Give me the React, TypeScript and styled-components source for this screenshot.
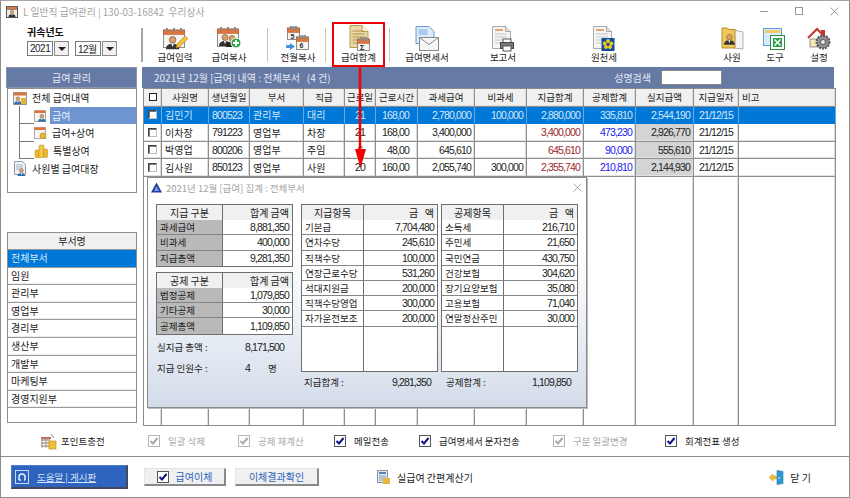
import React from "react";
import styled, { createGlobalStyle } from "styled-components";

const KR = `"Noto Sans CJK KR", "Noto Sans", sans-serif`;
const NUM = `"Liberation Sans", "Noto Sans CJK KR", sans-serif`;

const Global = createGlobalStyle`
  html, body { margin: 0; padding: 0; background: #fff; }
  * { box-sizing: border-box; }
  #root { width: 850px; height: 498px; overflow: hidden; }
`;

const Win = styled.div`
  position: relative; width: 850px; height: 498px; background: #fff;
  border: 1px solid #8c8c8c; border-top-color: #a5a5a5;
  display: flex; flex-direction: column;
  font-family: ${KR}; font-size: 9.5px; color: #222; overflow: hidden;
`;
const TitleBar = styled.div`
  height: 21px; display: flex; align-items: center; padding: 0 10px 0 5px; flex: none;
`;
const TitleText = styled.span`
  margin-left: 5px; color: #a3a3a3; font-size: 9.8px; white-space: pre;
`;
const WinBtns = styled.div`margin-left: auto; display: flex; gap: 26px; align-items: center;`;

const Toolbar = styled.div`height: 45px; flex: none; display: flex; align-items: stretch; padding-left: 26px;`;
const YearBlock = styled.div`width: 114px; padding-top: 3px; display: flex; flex-direction: column; gap: 3px;`;
const YearLabel = styled.div`font-weight: 700; font-size: 10px; line-height: 13px; color: #111;`;
const Selects = styled.div`display: flex; gap: 6px;`;
const Select = styled.div`display: flex; gap: 1px; width: 42px; height: 15px;`;
const SelectValue = styled.div`
  width: 26px; border: 1px solid #7a7a7a; display: flex; align-items: center; padding-left: 2px;
  font-size: 10px; letter-spacing: -.5px; color: #222; font-family: ${NUM}; background: #fff; white-space: nowrap; overflow: hidden;
`;
const SelectArrow = styled.span`
  flex: 1; background: #f0f0f0; border: 1px solid #8a8a8a;
  display: flex; align-items: center; justify-content: center;
  &::after { content: ""; border-left: 4px solid transparent; border-right: 4px solid transparent; border-top: 4px solid #222; }
`;
const Divider = styled.div<{ $ml?: number; $thick?: boolean }>`
  flex: none; margin: 6px 0 5px ${p => p.$ml ?? 0}px; width: ${p => (p.$thick ? 2 : 1)}px;
  background: ${p => (p.$thick ? "#a6a6a6" : "#c4c4c4")};
`;
const ToolBtn = styled.div<{ $w: number; $ml?: number }>`
  flex: none; width: ${p => p.$w}px; margin-left: ${p => p.$ml ?? 0}px;
  display: flex; flex-direction: column; align-items: center; padding-top: 4px; position: relative;
`;
const ToolIcon = styled.div`height: 25px; display: flex; align-items: center; justify-content: center;`;
const ToolLabel = styled.div`font-size: 9.5px; line-height: 13px; color: #222; white-space: nowrap;`;
const RedBox = styled.div`
  position: absolute; left: 0; right: 0; top: 0; bottom: 0; border: 2px solid #f00000; pointer-events: none;
`;
const RedArrow = styled.svg`position: absolute; left: 352px; top: 64px; z-index: 5;`;

const Body = styled.div`height: 359px; flex: none; display: flex; padding-left: 5px;`;
const Left = styled.div`width: 131px; flex: none; display: flex; flex-direction: column;`;
const PanelHead = styled.div`
  height: 21px; flex: none; background: #667aa6; color: #e6eaf3; display: flex; align-items: center;
  border: 1px solid #8793ad; font-size: 10px; white-space: pre;
`;
const LeftHead = styled(PanelHead)`justify-content: center;`;
const Tree = styled.div`
  height: 105px; flex: none; margin-left: 1px; border: 1px solid #8e8e8e; position: relative;
`;
const TreeRow = styled.div<{ $sub?: boolean }>`
  height: 17.6px; display: flex; align-items: center; padding-left: ${p => (p.$sub ? 26 : 5)}px; gap: 3px;
  font-size: 10px; color: #222; white-space: nowrap;
`;
const TreeText = styled.span<{ $sel?: boolean }>`
  flex: ${p => (p.$sel ? 1 : "none")}; height: 17px; line-height: 17px; padding-left: 2px;
  background: ${p => (p.$sel ? "#6f94d2" : "transparent")}; color: ${p => (p.$sel ? "#e9f0fa" : "#222")};
`;
const TreeLines = styled.div`
  position: absolute; left: 11px; top: 17px; width: 14px; height: 53px; border-left: 1px solid #777;
  &::before, &::after { content: ""; position: absolute; left: 0; width: 14px; border-top: 1px solid #777; }
  &::before { top: 17px; }
  &::after { top: 35px; }
  & > i { position: absolute; left: 0; top: 52px; width: 14px; border-top: 1px solid #777; }
`;
const Dept = styled.div`
  margin: 39px 0 0 1px; height: 191px; flex: none; border: 1px solid #8e8e8e; display: flex; flex-direction: column;
`;
const DeptHead = styled.div`
  height: 17px; flex: none; background: #f0f0f0; text-align: center; line-height: 16px; font-size: 10px; border-bottom: 1px solid #999;
`;
const DeptRow = styled.div<{ $sel?: boolean }>`
  height: 17.6px; flex: none; padding-left: 3px; line-height: 16px; font-size: 10px;
  background: ${p => (p.$sel ? "#0078d7" : "#fff")}; color: ${p => (p.$sel ? "#dcebfa" : "#222")};
  border-bottom: 1px solid #9a9a9a; box-shadow: inset 0 -1px 0 ${p => (p.$sel ? "#0078d7" : "#ececec")};
`;

const Main = styled.div`position: relative; margin-left: 5px; width: 694px; flex: none; display: flex; flex-direction: column;`;
const MainHead = styled(PanelHead)`margin-right: 2px; padding: 0 0 0 12px; border: none; justify-content: flex-start; font-size: 10px;`;
const SearchLabel = styled.span`margin-left: auto; margin-right: 10px;`;
const SearchInput = styled.div`width: 61px; height: 15px; background: #fff; border: 1px solid #888; margin-right: 112px;`;

const COLS = "18px 47px 41px 54px 41px 31px 42px 57px 52px 57px 52px 58px 45px 97px";
const Grid = styled.div`
  margin-left: 1px; flex: 1; display: flex; flex-direction: column; border-left: 1px solid #8a8a8a; border-top: 1px solid #8a8a8a; border-bottom: 1px solid #8a8a8a;
`;
const Row = styled.div<{ $sel?: boolean; $head?: boolean; $fill?: boolean }>`
  display: grid; grid-template-columns: ${COLS};
  ${p => (p.$fill ? "flex: 1;" : "height: 17.5px; flex: none;")}
  background: ${p => (p.$sel ? "#0078d7" : p.$head ? "#f0f0f0" : "#fff")};
  color: ${p => (p.$sel ? "#d5e7f8" : "#222")};
`;
const Cell = styled.div<{ $num?: boolean; $align?: "left" | "right" | "center"; $pr?: number; $color?: string; $bg?: string; $head?: boolean; $last?: boolean; $sel?: boolean }>`
  border-right: 1px solid ${p => (p.$sel ? "#6aa8e0" : "#8f8f8f")};
  border-bottom: ${p => (p.$last ? "none" : `1px solid ${p.$sel ? "#0078d7" : "#8f8f8f"}`)};
  box-shadow: ${p => (p.$sel ? "none" : `inset -1px 0 0 #dcdcdc${p.$last ? "" : ", inset 0 -1px 0 #e2e2e2"}`)};
  padding: 0 ${p => p.$pr ?? 3}px 0 3px; display: flex; align-items: center; overflow: hidden; white-space: nowrap;
  justify-content: ${p => (p.$align === "center" ? "center" : p.$align === "right" ? "flex-end" : "flex-start")};
  font-family: ${p => (p.$num ? NUM : KR)}; font-size: ${p => (p.$num ? 10.5 : p.$head ? 9.5 : 10)}px;
  letter-spacing: ${p => (p.$num ? "-.85px" : "0")};
  ${p => (p.$color ? `color: ${p.$color};` : "")}
  ${p => (p.$bg ? `background: ${p.$bg};` : "")}
`;
const Check = styled.span`
  width: 9px; height: 9px; display: inline-block; background: #fff;
  border: 1px solid #444; border-right-color: #bbb; border-bottom-color: #bbb; box-shadow: inset 1px 1px 0 #777;
`;
const HeadCheck = styled.span`width: 8px; height: 8px; border: 1px solid #222; display: inline-block; background: #fff;`;

const Popup = styled.div`
  position: absolute; left: 5px; top: 110px; width: 440px; height: 231px; z-index: 3;
  border: 1px solid #8a8a8a; box-shadow: 1px 1px 0 #bbb;
  background: linear-gradient(#fff 0%, #fff 30%, #eef2f7 60%, #d3dcea 100%);
`;
const PopTitle = styled.div`
  height: 17px; display: flex; align-items: center; padding: 2px 4px 0 3px; color: #a4a4a4; font-size: 9.5px; gap: 4px;
`;
const PopClose = styled.svg`margin-left: auto;`;
const PopBody = styled.div`display: flex; height: 177px; padding: 9px 0 0 8px;`;
const PopLeft = styled.div`width: 137px; flex: none; display: flex; flex-direction: column;`;
const Tbl = styled.div<{ $h?: number; $ml?: number; $mt?: number }>`
  width: 137px; flex: none; ${p => (p.$h ? `height: ${p.$h}px;` : "")} margin: ${p => p.$mt ?? 0}px 0 0 ${p => p.$ml ?? 0}px;
  border: 1px solid #6e6e6e; background: #fff; display: flex; flex-direction: column;
`;
const TRow = styled.div<{ $first: number }>`
  height: 15.2px; flex: none; display: grid; grid-template-columns: ${p => p.$first}px 1fr;
`;
const TFill = styled.div<{ $first: number }>`flex: 1; display: grid; grid-template-columns: ${p => p.$first}px 1fr;`;
const TCell = styled.div<{ $kind?: "head" | "label" | "plain"; $right?: boolean; $num?: boolean; $noBottom?: boolean }>`
  display: flex; align-items: center; padding: 0 3px; white-space: pre; font-size: ${p => (p.$num ? 10.5 : p.$kind === "head" ? 10 : 9.5)}px;
  font-family: ${p => (p.$num ? NUM : KR)}; letter-spacing: ${p => (p.$num ? "-.85px" : "0")};
  justify-content: ${p => (p.$right ? "flex-end" : p.$kind === "head" ? "center" : "flex-start")};
  background: ${p => (p.$kind === "head" ? "#f0f0f0" : p.$kind === "label" ? "#b9b9b9" : "#fff")};
  border-bottom: ${p => (p.$noBottom ? "none" : "1px solid #868686")};
  &:first-child { border-right: 1px solid #6e6e6e; }
`;
const Stats = styled.div`margin-top: 2px;`;
const Stat = styled.div`
  display: flex; height: 21px; align-items: center; padding-left: 1px; font-size: 9.5px; white-space: pre;
`;
const StatValue = styled.span<{ $x?: number }>`margin-left: ${p => p.$x ?? 0}px; font-family: ${NUM}; font-size: 10.5px; letter-spacing: -.85px;`;
const StatUnit = styled.span`margin-left: 18px;`;
const StatLabel = styled.span`width: 88px; flex: none;`;
const Sums = styled.div`display: flex; padding-left: 154px; margin-top: 2px; height: 15px; align-items: center;`;
const Sum = styled.div<{ $w: number; $pl?: number }>`
  width: ${p => p.$w}px; flex: none; display: flex; justify-content: space-between; padding-left: ${p => p.$pl ?? 2}px; font-size: 9.5px; align-items: center;
`;
const SumNum = styled.span`font-family: ${NUM}; font-size: 10.5px; letter-spacing: -.85px;`;

const Options = styled.div`
  height: 31px; flex: none; display: flex; align-items: flex-start; padding: 7px 0 0 39px;
  border-bottom: 1px solid #8e8e8e;
`;
const OptPoint = styled.div`display: flex; align-items: center; gap: 4px; width: 108px; height: 16px; font-size: 9.5px; color: #222;`;
const Opt = styled.div<{ $w: number; $off?: boolean }>`
  width: ${p => p.$w}px; flex: none; display: flex; align-items: center; height: 16px; gap: 8px; font-size: 9.5px;
  color: ${p => (p.$off ? "#a8a8a8" : "#222")}; white-space: pre;
`;
const Bottom = styled.div`flex: 1; display: flex; align-items: center; padding: 0 0 0 10px;`;
const Help = styled.div`
  width: 117px; height: 24px; background: #2e64bd; display: flex; align-items: center; padding-left: 3px; gap: 8px;
  color: #d5e4f8; text-decoration: underline; font-size: 9.5px; white-space: pre;
  border-top: 1px solid #4c7fd0; border-left: 1px solid #4c7fd0; border-right: 2px solid #404a5c; border-bottom: 2px solid #404a5c;
`;
const BevelBtn = styled.div<{ $w: number; $ml: number }>`
  width: ${p => p.$w}px; height: 18px; margin-left: ${p => p.$ml}px; background: #f0f0f0; color: #2a62b8; display: flex; align-items: center;
  justify-content: center; gap: 7px; font-size: 10px; border-right: 2px solid #8a8a8a; border-bottom: 2px solid #8a8a8a; border-top: 1px solid #e4e4e4; border-left: 1px solid #e4e4e4;
`;
const Calc = styled.div`margin-left: 58px; display: flex; align-items: center; gap: 6px; font-size: 10px; color: #222;`;
const CloseBtn = styled.div`margin-left: auto; margin-right: 38px; display: flex; align-items: center; gap: 6px; font-size: 10px; color: #222; white-space: pre;`;

/* ---------- icons ---------- */
const CheckMark = ({ off }: { off?: boolean }) => (
  <svg width="12" height="12" viewBox="0 0 12 12">
    <rect x=".5" y=".5" width="11" height="11" fill="#fff" stroke={off ? "#b5b5b5" : "#555"} />
    <path d="M2.5 6l2.500 2.500L9.500 3" fill="none" stroke={off ? "#a9a9a9" : "#10108c"} strokeWidth="2" />
  </svg>
);
const Person = ({ x = 0, y = 0, s = 1, c = "#2f5f8f" }: { x?: number; y?: number; s?: number; c?: string }) => (
  <g transform={`translate(${x} ${y}) scale(${s})`}>
    <circle cx="6" cy="3.5" r="3" fill="#d9a06a" stroke="#5b3a1e" strokeWidth=".5" />
    <path d="M0 12c0-3.5 2.5-5 6-5s6 1.500 6 5z" fill={c} />
    <path d="M4.8 7l1.200 3 1.200-3z" fill="#fff" />
  </g>
);
const CalBase = ({ x = 0, y = 0, w = 22, h = 20 }: { x?: number; y?: number; w?: number; h?: number }) => (
  <g transform={`translate(${x} ${y})`}>
    <rect x=".5" y="2" width={w - 1} height={h - 2.5} fill="#f7f5f2" stroke="#8d8d8d" />
    <rect x=".5" y="2" width={w - 1} height="4.5" fill="#e2733a" stroke="#b2582b" strokeWidth=".5" />
    {[3, w / 2 - 1, w - 5].map(v => <rect key={v} x={v} y="0" width="2" height="4" fill="#8a8a8a" />)}
  </g>
);
const IconEntry = () => (
  <svg width="25" height="24" viewBox="0 0 25 24">
    <CalBase y="1" />
    <Person x="3" y="9" s="1.1" c="#333" />
    <path d="M13 21l1-4 8-8 3 2.500-8 8z" fill="#f0c23a" stroke="#a47a16" strokeWidth=".6" />
  </svg>
);
const IconCopy = () => (
  <svg width="25" height="24" viewBox="0 0 25 24">
    <CalBase y="0" />
    <Person x="2" y="7" s="1" c="#333" />
    <Person x="9" y="8" s="1" c="#222" />
    <circle cx="19" cy="16" r="5" fill="#2da84a" stroke="#fff" />
    <path d="M19 13v6M16 16h6" stroke="#fff" strokeWidth="2" />
  </svg>
);
const IconMonth = () => (
  <svg width="24" height="25" viewBox="0 0 24 25">
    <CalBase x="1" y="0" w="13" h="14" />
    <text x="4.500" y="12.500" fontSize="7" fontWeight="700" fill="#333" fontFamily="Liberation Sans">5</text>
    <CalBase x="10" y="9" w="13" h="15" />
    <text x="13.500" y="22" fontSize="7" fontWeight="700" fill="#333" fontFamily="Liberation Sans">6</text>
    <path d="M1 15v4h3v-2l5 3.500-5 3.500v-2H0" fill="#3d8fdb" />
  </svg>
);
const IconSum = () => (
  <svg width="24" height="27" viewBox="0 0 24 27">
    <path d="M3 .5h12l6 6v16H3z" fill="#e8d8a6" stroke="#b99c58" />
    <path d="M15 .5v6h6" fill="#fff7d9" stroke="#b99c58" />
    {[6, 9, 12, 15, 18].map(y => <path key={y} d={`M5.500 ${y}h12`} stroke="#b58f4d" />)}
    <CalBase x="10" y="12" w="13" h="14" />
    <text x="13" y="24.500" fontSize="7.500" fontWeight="700" fill="#222" fontFamily="Liberation Sans">Σ</text>
  </svg>
);
const IconMail = () => (
  <svg width="26" height="26" viewBox="0 0 26 26">
    <path d="M2 .5h13l5 5v12H2z" fill="#dcebfa" stroke="#6b9bd0" />
    <rect x="4.500" y="3" width="9" height="6" fill="#a9cbee" />
    <rect x="5.500" y="11.500" width="19" height="13" fill="#f6f6f6" stroke="#8a8a8a" />
    <path d="M5.500 11.500l9.500 7 9.500-7" fill="none" stroke="#8a8a8a" />
  </svg>
);
const DocBase = () => (
  <>
    <path d="M1.500 .5h13l5 5v17h-18z" fill="#f6f6f6" stroke="#a9a9a9" />
    <path d="M14.500 .5v5h5" fill="#e2e2e2" stroke="#a9a9a9" />
    <path d="M4 4h8" stroke="#e08a4a" strokeWidth="1.500" />
    {[8, 11, 14, 17].map(y => <path key={y} d={`M4 ${y}h12`} stroke="#c4c4c4" />)}
  </>
);
const IconReport = () => (
  <svg width="24" height="26" viewBox="0 0 24 26">
    <DocBase />
    <rect x="12" y="13" width="8" height="4" fill="#fff" stroke="#555" />
    <rect x="9.500" y="16.500" width="13" height="6" fill="#777" stroke="#444" />
    <rect x="12" y="20" width="8" height="5" fill="#fff" stroke="#555" />
  </svg>
);
const IconTax = () => (
  <svg width="24" height="26" viewBox="0 0 24 26">
    <DocBase />
    <rect x="9.500" y="12" width="13" height="13" fill="#0b4f9e" />
    {[[16, 15], [19.300, 17.500], [18, 21], [14, 21], [12.700, 17.500]].map(([a, b]) => <circle key={a} cx={a} cy={b} r="2" fill="#f2c81e" />)}
    <circle cx="16" cy="18.500" r="1.300" fill="#0b4f9e" />
  </svg>
);
const IconStaff = () => (
  <svg width="23" height="24" viewBox="0 0 23 24">
    <path d="M13 3l9 2v17l-9-1z" fill="#f4f4f4" stroke="#b0b0b0" />
    <path d="M1 1h5l2 1.500h6v18.500H1z" fill="#f0c85a" stroke="#b48b2c" />
    <Person x="3" y="7" s=".9" c="#333" />
  </svg>
);
const IconTool = () => (
  <svg width="24" height="24" viewBox="0 0 24 24">
    <rect x=".5" y="1.500" width="18" height="17" fill="#d8ebfb" stroke="#5d9bd3" />
    <rect x="2" y="3" width="15" height="3" fill="#f1c86a" />
    <rect x="7.500" y="8.500" width="14" height="14" fill="#fff" stroke="#2f8d46" />
    <rect x="10" y="11" width="9" height="9" fill="#2f9c4d" />
    <path d="M11.500 12.500l6 6M17.500 12.500l-6 6" stroke="#fff" strokeWidth="1.500" />
  </svg>
);
const IconSetup = () => (
  <svg width="25" height="24" viewBox="0 0 25 24">
    <path d="M1 11L10 2l5 5v-3h2v6" fill="none" stroke="#c8342c" strokeWidth="2" />
    <path d="M3 12h9v8H3z" fill="#f6e7b8" stroke="#555" strokeWidth=".6" />
    <circle cx="16" cy="15" r="6.500" fill="#8f8f8f" stroke="#555" strokeDasharray="2 1" strokeWidth="2" />
    <circle cx="16" cy="15" r="2.500" fill="#eee" stroke="#555" />
  </svg>
);
const IconTitle = () => (
  <svg width="12" height="13" viewBox="0 0 12 13">
    <rect x=".5" y="1.500" width="11" height="11" fill="#f4eee6" stroke="#555" />
    <rect x=".5" y="1.500" width="11" height="3" fill="#cf7a45" stroke="#555" strokeWidth=".5" />
    <Person x="2.500" y="5" s=".58" c="#333" />
  </svg>
);
const SmallCal = ({ badge }: { badge?: "person" | "coin" }) => (
  <svg width="13" height="13" viewBox="0 0 13 13">
    <rect x=".5" y="1.500" width="11" height="11" fill="#f7f5f2" stroke="#aaa" />
    <rect x=".5" y="1.500" width="11" height="2.500" fill="#e2733a" />
    {badge === "person" ? <Person x="4" y="5" s=".65" c="#2f6fa8" /> : <rect x="6" y="7" width="6" height="6" rx="2.500" fill="#e3b53a" stroke="#a47a16" strokeWidth=".5" />}
  </svg>
);
const AllIcon = () => (
  <svg width="14" height="14" viewBox="0 0 14 14">
    <rect x=".5" y="1.500" width="13" height="12" fill="#f7f5f2" stroke="#999" />
    <rect x=".5" y="1.500" width="13" height="3" fill="#d9743e" />
    <Person x="1" y="5.500" s=".65" c="#2f6fa8" />
    <rect x="8" y="7" width="5" height="6" fill="#e3b53a" />
  </svg>
);
const Coins = () => (
  <svg width="14" height="14" viewBox="0 0 14 14">
    <rect x="1" y="6" width="5" height="7.500" rx="1" fill="#edb72f" stroke="#b6841c" strokeWidth=".5" />
    <rect x="5" y="1" width="5" height="12.500" rx="1" fill="#f3c744" stroke="#b6841c" strokeWidth=".5" />
    <rect x="9.500" y="5" width="4" height="8.500" rx="1" fill="#edb72f" stroke="#b6841c" strokeWidth=".5" />
  </svg>
);
const Ledger = () => (
  <svg width="14" height="15" viewBox="0 0 14 15">
    <path d="M1.500 .5h8l3 3v10h-11z" fill="#eef1f5" stroke="#8c9bb0" />
    {[4, 6, 8].map(y => <path key={y} d={`M3 ${y}h7`} stroke="#aab4c2" />)}
    <Person x="4.500" y="7.500" s=".65" c="#2f6fa8" />
  </svg>
);
const PointIcon = () => (
  <svg width="17" height="17" viewBox="0 0 17 17">
    <path d="M1 5h10" stroke="#b5362c" strokeWidth="1.500" />
    {[7, 10, 13].map(y => <path key={y} d={`M1 ${y}h9`} stroke="#8a6a4a" />)}
    <path d="M2 5v10M6 5v10" stroke="#999" />
    <path d="M11 1l3 4" stroke="#888" />
    <rect x="9" y="8" width="7" height="8" fill="#efc03a" stroke="#b98d1d" strokeWidth=".6" />
  </svg>
);
const CalcIcon = () => (
  <svg width="14" height="15" viewBox="0 0 14 15">
    <rect x=".5" y=".5" width="10" height="12" fill="#dfe6ee" stroke="#8493a6" />
    <rect x="2" y="2" width="7" height="2" fill="#5d83b1" />
    <path d="M2 6h7M2 8h7M2 10h7" stroke="#8aa0b8" />
    <rect x="6" y="8" width="7" height="6" fill="#e6b93e" />
  </svg>
);
const DoorIcon = () => (
  <svg width="15" height="15" viewBox="0 0 15 15">
    <path d="M8 .5l6 1v12l-6 1z" fill="#2d9ad8" stroke="#1c76ad" strokeWidth=".6" />
    <circle cx="10" cy="8" r=".8" fill="#fff" />
    <path d="M0 7.500l4-3.500v2h3.500v3H4v2z" fill="#eec13a" stroke="#b98d1d" strokeWidth=".5" />
  </svg>
);
const HelpIcon = () => (
  <svg width="14" height="14" viewBox="0 0 14 14">
    <rect x=".5" y=".5" width="13" height="13" fill="none" stroke="#c8d9f2" />
    <path d="M4 10V7a3 3 0 0 1 6 0v3" fill="none" stroke="#e6effb" strokeWidth="1.500" />
    <path d="M4 10h2M10 10H9" stroke="#e6effb" strokeWidth="1.500" />
  </svg>
);
const Tri = () => (
  <svg width="11" height="11" viewBox="0 0 11 11">
    <path d="M5.500 .5L11 10.500H0z" fill="#1f3f9e" />
    <path d="M5.500 4L8 9H3z" fill="#7f9ae0" />
  </svg>
);

/* ---------- data ---------- */
const HEAD = ["사원명", "생년월일", "부서", "직급", "근로일", "근로시간", "과세급여", "비과세", "지급합계", "공제합계", "실지급액", "지급일자"];
const RED = "#9a1f2c";
const BLUE = "#1a1af0";
const ROWS = [
  ["김민기", "800523", "관리부", "대리", "21", "168,00", "2,780,000", "100,000", "2,880,000", "335,810", "2,544,190", "21/12/15"],
  ["이차장", "791223", "영업부", "차장", "21", "168,00", "3,400,000", "", "3,400,000", "473,230", "2,926,770", "21/12/15"],
  ["박영업", "800206", "영업부", "주임", "6", "48,00", "645,610", "", "645,610", "90,000", "555,610", "21/12/15"],
  ["김사원", "850123", "영업부", "사원", "20", "160,00", "2,055,740", "300,000", "2,355,740", "210,810", "2,144,930", "21/12/15"],
];
const NUMS = new Set([1, 4, 5, 6, 7, 8, 9, 10, 11]);
const alignOf = (i: number): "left" | "right" | "center" =>
  i === 4 || i === 11 ? "center" : i >= 5 && i <= 10 ? "right" : "left";
const DEPTS = ["전체부서", "임원", "관리부", "영업부", "경리부", "생산부", "개발부", "마케팅부", "경영지원부"];
const T1 = [["과세급여", "8,881,350"], ["비과세", "400,000"], ["지급총액", "9,281,350"]];
const T2 = [["법정공제", "1,079,850"], ["기타공제", "30,000"], ["공제총액", "1,109,850"]];
const T3 = [["기본급", "7,704,480"], ["연차수당", "245,610"], ["직책수당", "100,000"], ["연장근로수당", "531,260"], ["석대지원금", "200,000"], ["직책수당영업", "300,000"], ["자가운전보조", "200,000"]];
const T4 = [["소득세", "216,710"], ["주민세", "21,650"], ["국민연금", "430,750"], ["건강보험", "304,620"], ["장기요양보험", "35,080"], ["고용보험", "71,040"], ["연말정산주민", "30,000"]];

const SmallTable = ({ head, rows, mt }: { head: string; rows: string[][]; mt?: number }) => (
  <Tbl $mt={mt}>
    <TRow $first={66}><TCell $kind="head">{head}</TCell><TCell $kind="head" $right>합계 금액</TCell></TRow>
    {rows.map((r, i) => (
      <TRow $first={66} key={r[0]}>
        <TCell $kind="label" $noBottom={i === rows.length - 1}>{r[0]}</TCell>
        <TCell $right $num $noBottom={i === rows.length - 1}>{r[1]}</TCell>
      </TRow>
    ))}
  </Tbl>
);
const LongTable = ({ head, rows, ml }: { head: string; rows: string[][]; ml: number }) => (
  <Tbl $h={168} $ml={ml}>
    <TRow $first={62}><TCell $kind="head">{head}</TCell><TCell $kind="head" $right>{"금   액"}</TCell></TRow>
    {rows.map(r => (
      <TRow $first={62} key={r[0]}><TCell>{r[0]}</TCell><TCell $right $num>{r[1]}</TCell></TRow>
    ))}
    <TFill $first={62}><TCell $noBottom /><TCell $noBottom /></TFill>
  </Tbl>
);

export default function App() {
  return (
    <Win>
      <Global />
      <TitleBar>
        <IconTitle />
        <TitleText>L 일반직 급여관리 | 130-03-16842  우리상사</TitleText>
        <WinBtns>
          <svg width="9" height="9" viewBox="0 0 9 9"><path d="M0 4.500h8" stroke="#999" /></svg>
          <svg width="9" height="9" viewBox="0 0 9 9"><rect x=".5" y=".5" width="7" height="7" fill="none" stroke="#999" /></svg>
          <svg width="9" height="9" viewBox="0 0 9 9"><path d="M.5.5l8 8M8.500.5l-8 8" stroke="#999" /></svg>
        </WinBtns>
      </TitleBar>
      <Toolbar>
        <YearBlock>
          <YearLabel>귀속년도</YearLabel>
          <Selects>
            <Select><SelectValue>2021</SelectValue><SelectArrow /></Select>
            <Select><SelectValue>12월</SelectValue><SelectArrow /></Select>
          </Selects>
        </YearBlock>
        <Divider $thick />
        <ToolBtn $w={64}><ToolIcon><IconEntry /></ToolIcon><ToolLabel>급여입력</ToolLabel></ToolBtn>
        <ToolBtn $w={44}><ToolIcon><IconCopy /></ToolIcon><ToolLabel>급여복사</ToolLabel></ToolBtn>
        <Divider $ml={16} />
        <ToolBtn $w={54} $ml={3}><ToolIcon><IconMonth /></ToolIcon><ToolLabel>전월복사</ToolLabel></ToolBtn>
        <Divider />
        <ToolBtn $w={53} $ml={6}>
          <ToolIcon><IconSum /></ToolIcon><ToolLabel>급여합계</ToolLabel><RedBox />
        </ToolBtn>
        <Divider $ml={4} />
        <ToolBtn $w={74}><ToolIcon><IconMail /></ToolIcon><ToolLabel>급여명세서</ToolLabel></ToolBtn>
        <ToolBtn $w={78}><ToolIcon><IconReport /></ToolIcon><ToolLabel>보고서</ToolLabel></ToolBtn>
        <ToolBtn $w={124}><ToolIcon><IconTax /></ToolIcon><ToolLabel>원천세</ToolLabel></ToolBtn>
        <ToolBtn $w={44} $ml={44}><ToolIcon><IconStaff /></ToolIcon><ToolLabel>사원</ToolLabel></ToolBtn>
        <ToolBtn $w={42}><ToolIcon><IconTool /></ToolIcon><ToolLabel>도구</ToolLabel></ToolBtn>
        <ToolBtn $w={46}><ToolIcon><IconSetup /></ToolIcon><ToolLabel>설정</ToolLabel></ToolBtn>
      </Toolbar>
      <RedArrow width="16" height="108" viewBox="0 0 16 108">
        <path d="M7 0v90" stroke="#f00000" strokeWidth="2.500" />
        <path d="M2 84h11l-5.500 19z" fill="#f00000" />
      </RedArrow>
      <Body>
        <Left>
          <LeftHead>급여 관리</LeftHead>
          <Tree>
            <TreeLines><i /></TreeLines>
            <TreeRow><AllIcon /><TreeText>전체 급여내역</TreeText></TreeRow>
            <TreeRow $sub><SmallCal badge="person" /><TreeText $sel>급여</TreeText></TreeRow>
            <TreeRow $sub><SmallCal badge="coin" /><TreeText>급여+상여</TreeText></TreeRow>
            <TreeRow $sub><Coins /><TreeText>특별상여</TreeText></TreeRow>
            <TreeRow><Ledger /><TreeText>사원별 급여대장</TreeText></TreeRow>
          </Tree>
          <Dept>
            <DeptHead>부서명</DeptHead>
            {DEPTS.map((d, i) => <DeptRow key={d} $sel={i === 0}>{d}</DeptRow>)}
          </Dept>
        </Left>
        <Main>
          <MainHead>
            {"2021년 12월 [급여] 내역 : 전체부서   (4 건)"}
            <SearchLabel>성명검색</SearchLabel>
            <SearchInput />
          </MainHead>
          <Grid>
            <Row $head>
              <Cell $align="center" $head><HeadCheck /></Cell>
              {HEAD.map(h => <Cell key={h} $align="center" $head>{h}</Cell>)}
              <Cell $head>비고</Cell>
            </Row>
            {ROWS.map((r, ri) => {
              const sel = ri === 0;
              return (
                <Row key={r[0]} $sel={sel}>
                  <Cell $align="center" $sel={sel}><Check /></Cell>
                  {r.map((v, i) => (
                    <Cell
                      key={i}
                      $sel={sel}
                      $num={NUMS.has(i)}
                      $align={alignOf(i)}
                      $pr={i === 5 ? 8 : 3}
                      $color={!sel && i === 8 ? RED : !sel && i === 9 ? BLUE : undefined}
                      $bg={!sel && i === 10 ? "#d4d4d4" : undefined}
                    >{v}</Cell>
                  ))}
                  <Cell $sel={sel} />
                </Row>
              );
            })}
            <Row $fill>
              {Array.from({ length: 14 }, (_, i) => <Cell key={i} $last />)}
            </Row>
          </Grid>
          <Popup>
            <PopTitle>
              <Tri />2021년 12월 [급여] 집계 : 전체부서
              <PopClose width="9" height="9" viewBox="0 0 9 9"><path d="M.5.5l8 8M8.500.5l-8 8" stroke="#a8a8a8" /></PopClose>
            </PopTitle>
            <PopBody>
              <PopLeft>
                <SmallTable head="지급 구분" rows={T1} />
                <SmallTable head="공제 구분" rows={T2} mt={5} />
                <Stats>
                  <Stat><StatLabel>실지급 총액 :</StatLabel><StatValue>8,171,500</StatValue></Stat>
                  <Stat><StatLabel>지급 인원수 :</StatLabel><StatValue>4</StatValue><StatUnit>명</StatUnit></Stat>
                </Stats>
              </PopLeft>
              <LongTable head="지급항목" rows={T3} ml={8} />
              <LongTable head="공제항목" rows={T4} ml={3} />
            </PopBody>
            <Sums>
              <Sum $w={129}><span>지급합계 :</span><SumNum>9,281,350</SumNum></Sum>
              <Sum $w={140} $pl={15}><span>공제합계 :</span><SumNum>1,109,850</SumNum></Sum>
            </Sums>
          </Popup>
        </Main>
      </Body>
      <Options>
        <OptPoint><PointIcon />포인트충전</OptPoint>
        <Opt $w={90} $off><CheckMark off />일괄 삭제</Opt>
        <Opt $w={96} $off><CheckMark off />공제 재계산</Opt>
        <Opt $w={85}><CheckMark />메일전송</Opt>
        <Opt $w={134}><CheckMark />급여명세서 문자전송</Opt>
        <Opt $w={112} $off><CheckMark off />구분 일괄변경</Opt>
        <Opt $w={90}><CheckMark />회계전표 생성</Opt>
      </Options>
      <Bottom>
        <Help><HelpIcon />도움말 | 게시판</Help>
        <BevelBtn $w={82} $ml={16}><CheckMark />급여이체</BevelBtn>
        <BevelBtn $w={84} $ml={9}>이체결과확인</BevelBtn>
        <Calc><CalcIcon />실급여 간편계산기</Calc>
        <CloseBtn><DoorIcon />닫 기</CloseBtn>
      </Bottom>
    </Win>
  );
}
